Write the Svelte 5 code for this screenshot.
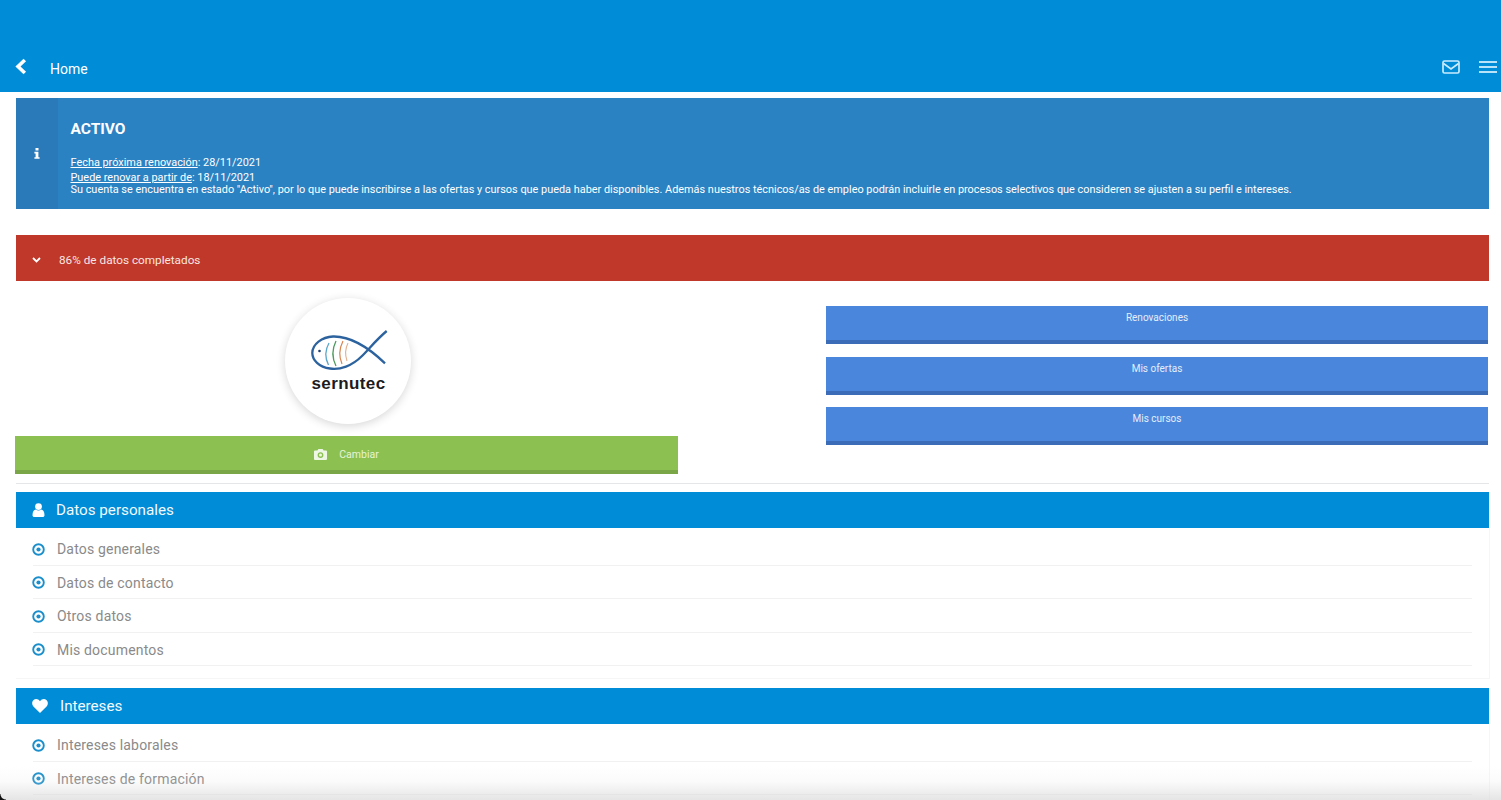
<script>
  const sections = [
    { title: 'Datos personales', icon: 'user', items: ['Datos generales', 'Datos de contacto', 'Otros datos', 'Mis documentos'] },
    { title: 'Intereses', icon: 'heart', items: ['Intereses laborales', 'Intereses de formación'] }
  ];
  const links = ['Renovaciones', 'Mis ofertas', 'Mis cursos'];
</script>

<div class="page">
  <header class="topbar">
    <svg class="back" width="12" height="18" viewBox="0 0 12 18"><path d="M9.8 2 L3 8.5 L9.8 15" fill="none" stroke="#fff" stroke-width="3.6" /></svg>
    <span class="home">Home</span>
    <svg class="mail" width="18" height="14" viewBox="0 0 18 14">
      <rect x="1" y="1" width="16" height="12" rx="1.5" fill="none" stroke="#c9ecff" stroke-width="1.7" />
      <path d="M1.5 3.5 L9 9 L16.5 3.5" fill="none" stroke="#c9ecff" stroke-width="1.7" />
    </svg>
    <div class="burger"><i></i><i></i><i></i></div>
  </header>

  <main class="content">
    <section class="info">
      <div class="info-icon">
        <svg width="6" height="11" viewBox="0 0 6 11"><path d="M1.5 0h3v2.4h-3zM0.4 3.8h4v5.4h1.2v1.6H0.4V9.2h1.2V5.4H0.4z" fill="#fff" /></svg>
      </div>
      <div class="info-body">
        <h2>ACTIVO</h2>
        <p class="date"><u>Fecha próxima renovación</u>: 28/11/2021</p>
        <p class="date second"><u>Puede renovar a partir de</u>: 18/11/2021</p>
        <p>Su cuenta se encuentra en estado "Activo", por lo que puede inscribirse a las ofertas y cursos que pueda haber disponibles. Además nuestros técnicos/as de empleo podrán incluirle en procesos selectivos que consideren se ajusten a su perfil e intereses.</p>
      </div>
    </section>

    <section class="progress">
      <svg width="9" height="6" viewBox="0 0 9 6"><path d="M1 1 L4.5 4.4 L8 1" fill="none" stroke="#fff" stroke-width="1.8" /></svg>
      <span>86% de datos completados</span>
    </section>

    <section class="profile">
      <div class="col-left">
        <div class="avatar">
          <svg class="fish" width="78" height="44" viewBox="0 0 78 44">
            <path d="M76.7 2 C66 11 60 19 52 27 C42 37 30 41 20 39.5 C9 38 2.3 31 2.3 24 C2.3 15 12 8 23 7.5 C40 7 58 18 75 34.3" fill="none" stroke="#2c639f" stroke-width="2.3" />
            <circle cx="9.5" cy="22" r="1.3" fill="#1d3f70" />
            <path d="M19 14 C15 21 15 29 18.5 36" fill="none" stroke="#5aa7c9" stroke-width="1.3" />
            <path d="M26 12 C22 20 22 29 26 37" fill="none" stroke="#4d9a5c" stroke-width="1.3" />
            <path d="M33 12 C29 20 29 28 32 35" fill="none" stroke="#d9844f" stroke-width="1.2" />
            <path d="M38 14 C35 20 35 26 37 32" fill="none" stroke="#e0b090" stroke-width="1.1" />
          </svg>
          <span class="brand">sernutec</span>
        </div>
        <button class="change">
          <svg width="13" height="11" viewBox="0 0 13 11"><path fill-rule="evenodd" d="M4.4 0h4.2l1 1.6H12a1 1 0 0 1 1 1V10a1 1 0 0 1-1 1H1a1 1 0 0 1-1-1V2.6a1 1 0 0 1 1-1h2.4zM6.5 3.2a2.9 2.9 0 1 0 0 5.8 2.9 2.9 0 0 0 0-5.8zM6.5 4.6a1.5 1.5 0 1 1 0 3 1.5 1.5 0 0 1 0-3z" fill="#eef7e4" /></svg>
          <span>Cambiar</span>
        </button>
      </div>
      <div class="col-right">
        {#each links as link}
          <button class="link">{link}</button>
        {/each}
      </div>
    </section>

    <hr />

    {#each sections as section}
      <section class="panel">
        <div class="panel-head">
          {#if section.icon === 'user'}
            <svg width="13" height="14" viewBox="0 0 13 14"><circle cx="6.5" cy="3.6" r="3.4" fill="#fff" /><path d="M0.5 12.2 C0.5 8.8 2 6.8 3.8 6.6 C5.4 7.8 7.6 7.8 9.2 6.6 C11 6.8 12.5 8.8 12.5 12.2 C12.5 13.4 11.6 14 10.8 14 H2.2 C1.4 14 0.5 13.4 0.5 12.2Z" fill="#fff" /></svg>
          {:else}
            <svg class="heart" width="16" height="14" viewBox="0 0 16 14"><path d="M8 14 L1.4 7.4 C-0.4 5.4 -0.2 2.4 1.6 0.9 C3.6 -0.6 6.4 -0.1 8 2.2 C9.6 -0.1 12.4 -0.6 14.4 0.9 C16.2 2.4 16.4 5.4 14.6 7.4Z" fill="#fff" /></svg>
          {/if}
          <span>{section.title}</span>
        </div>
        <ul>
          {#each section.items as item}
            <li>
              <svg width="13" height="13" viewBox="0 0 13 13"><circle cx="6.5" cy="6.5" r="5.3" fill="none" stroke="#1b8fcb" stroke-width="1.9" /><circle cx="6.5" cy="6.5" r="2.1" fill="#1b8fcb" /></svg>
              <span>{item}</span>
            </li>
          {/each}
        </ul>
      </section>
    {/each}
  </main>

  <div class="fade"></div>
  <div class="corner"></div>
</div>

<style>
  :global(body) {
    margin: 0;
    background: #fff;
    font-family: Roboto, "Liberation Sans", sans-serif;
  }

  .page {
    position: relative;
    height: 800px;
    overflow: hidden;
    background: #fff;
  }

  .topbar {
    height: 92px;
    box-sizing: border-box;
    background: #008cd6;
    display: flex;
    align-items: flex-end;
    padding: 0 4px 14px 15px;
    color: #fff;
  }

  .back {
    margin-bottom: 2px;
  }

  .home {
    margin-left: 23px;
    font-size: 14px;
    line-height: 18px;
  }

  .mail {
    margin-left: auto;
    margin-bottom: 4px;
  }

  .burger {
    margin-left: 19px;
    margin-bottom: 5px;
    width: 18px;
    display: flex;
    flex-direction: column;
    gap: 3px;
  }

  .burger i {
    height: 2px;
    background: #b8e3f8;
  }

  .content {
    padding: 6px 12px 0 16px;
  }

  .info {
    height: 111px;
    display: flex;
    background: #2b82c3;
    color: #fff;
    font-size: 10.9px;
    line-height: 11px;
  }

  .info-icon {
    width: 42px;
    flex-shrink: 0;
    background: #2a79b8;
    display: flex;
    align-items: center;
    justify-content: center;
  }

  .info-body {
    padding: 23px 12px 0 12.5px;
  }

  .info h2 {
    margin: 0 0 17px;
    font-size: 15.5px;
    line-height: 17px;
    font-weight: 700;
  }

  .info p {
    margin: 0;
    white-space: nowrap;
  }

  .info .date {
    line-height: 15px;
  }

  .info .second {
    line-height: 11px;
    margin: 2px 0 1px;
  }

  .progress {
    margin-top: 26px;
    height: 46px;
    box-sizing: border-box;
    padding: 4px 0 0 16px;
    background: #bf3829;
    color: #f7e6e2;
    font-size: 11.75px;
    display: flex;
    align-items: center;
    gap: 18px;
  }

  .profile {
    display: flex;
    justify-content: space-between;
    margin-left: -1px;
    height: 193px;
  }

  .col-left {
    width: 663px;
    padding-top: 17px;
    display: flex;
    flex-direction: column;
    align-items: center;
  }

  .avatar {
    width: 126px;
    height: 126px;
    margin-left: 2px;
    border-radius: 50%;
    background: #fff;
    box-shadow: 0 2px 10px rgba(0, 0, 0, 0.16);
    display: flex;
    flex-direction: column;
    align-items: center;
    padding: 31px 0 0 2px;
    box-sizing: border-box;
  }

  .fish {
    display: block;
  }

  .brand {
    margin-top: 1px;
    font-family: "Liberation Sans", Arial, sans-serif;
    font-weight: 700;
    font-size: 17px;
    line-height: 19px;
    letter-spacing: 0.4px;
    color: #1c1c1e;
  }

  button {
    border: 0;
    font-family: inherit;
    display: block;
    color: #fff;
  }

  .change {
    margin-top: 12px;
    width: 100%;
    height: 38px;
    background: #8cc152;
    border-bottom: 4px solid #7aa648;
    display: flex;
    align-items: center;
    justify-content: center;
    gap: 12px;
    padding: 2px 0 0;
    font-size: 10.5px;
    color: #e6f4d7;
  }

  .col-right {
    width: 662px;
    margin-right: 1px;
    padding-top: 25px;
    display: flex;
    flex-direction: column;
    gap: 12.5px;
  }

  .link {
    width: 100%;
    height: 38px;
    box-sizing: border-box;
    background: #4a86dc;
    border-bottom: 4px solid #3b6cb8;
    font-size: 10px;
    line-height: 12px;
    padding: 6px 0 0;
    text-align: center;
    display: flex;
    justify-content: center;
    align-items: flex-start;
    color: #e4eefb;
  }

  hr {
    margin: 9px 0 8px;
    border: 0;
    height: 1px;
    background: #e4e6e8;
  }

  .panel {
    margin-bottom: 9px;
    padding-bottom: 12px;
    border-bottom: 1px solid #f6f6f6;
    box-shadow: 1px 0 0 #f6f6f6;
  }

  .panel-head {
    height: 36px;
    background: #008cd6;
    color: #f2faff;
    font-size: 15.2px;
    display: flex;
    align-items: center;
    gap: 11px;
    padding-left: 16px;
    box-sizing: border-box;
  }

  .panel-head .heart {
    margin-right: 1px;
  }

  ul {
    list-style: none;
    margin: 0 17px;
    padding: 4px 0 0;
  }

  li {
    height: 33.5px;
    box-sizing: border-box;
    border-bottom: 1px solid #f1f1f1;
    padding-top: 2px;
    display: flex;
    align-items: center;
    gap: 12px;
    color: #8a8a8a;
    font-size: 14px;
    letter-spacing: 0.18px;
  }

  li svg {
    margin-left: -1px;
  }

  .fade {
    position: absolute;
    left: 0;
    right: 0;
    bottom: 0;
    height: 34px;
    background: linear-gradient(to bottom, rgba(220, 220, 220, 0), rgba(220, 220, 220, 0.12) 45%, rgba(215, 215, 215, 0.65));
    pointer-events: none;
  }

  .corner {
    position: absolute;
    left: 0;
    bottom: 0;
    width: 6px;
    height: 6px;
    background: radial-gradient(circle at top right, transparent 5px, #111 6px);
  }
</style>
